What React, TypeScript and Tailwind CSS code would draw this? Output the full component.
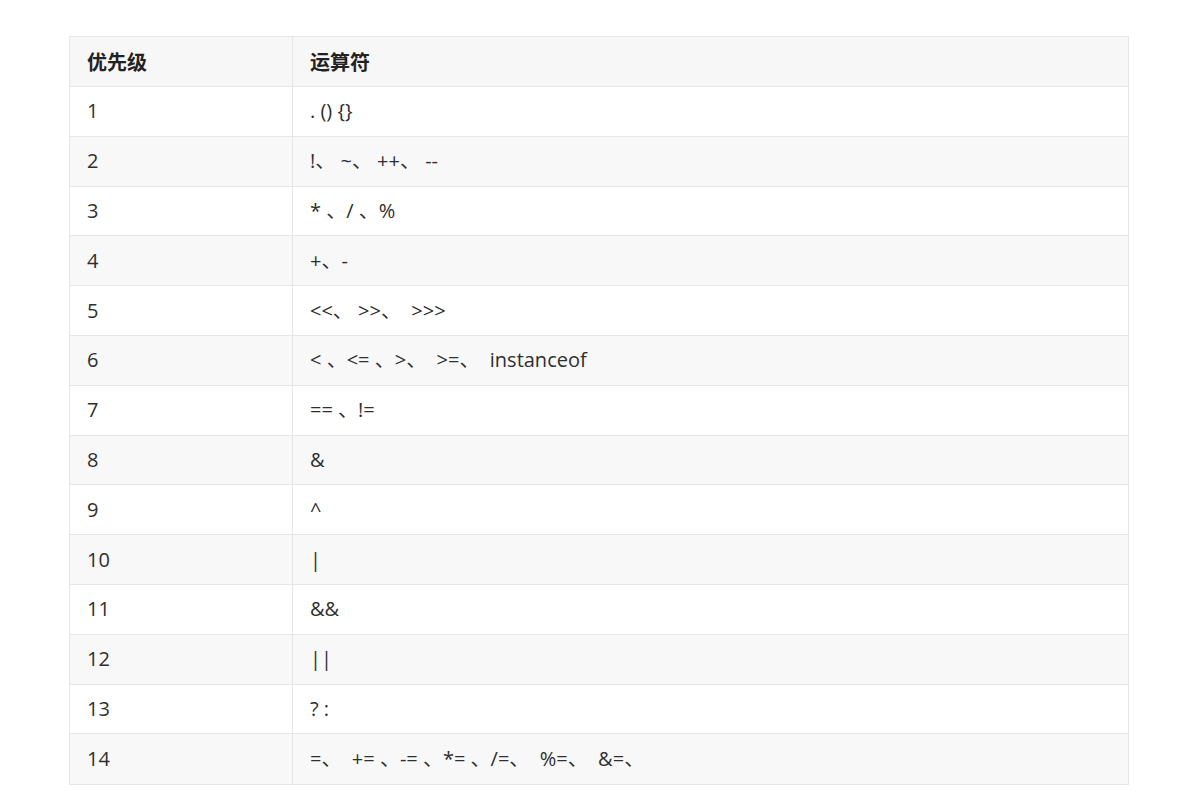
import React from "react";

const rows: [string, string][] = [
  ["1", ". () {}"],
  ["2", "!、 ~、 ++、 --"],
  ["3", "* 、/ 、%"],
  ["4", "+、-"],
  ["5", "<<、 >>、  >>>"],
  ["6", "< 、<= 、>、  >=、  instanceof"],
  ["7", "== 、!="],
  ["8", "&"],
  ["9", "^"],
  ["10", "|"],
  ["11", "&&"],
  ["12", "||"],
  ["13", "? :"],
  ["14", "=、  += 、-= 、*= 、/=、  %=、  &=、"],
];

export default function App() {
  return (
    <div
      className="w-[1195px] h-[808px] bg-white pt-[36px] pl-[69px]"
      style={{ fontFamily: '"Open Sans", "Noto Sans CJK SC", sans-serif' }}
    >
      <div className="w-[1060px] border border-[#e6e6e6] text-[20px] text-[#2f2f2f]">
        <div className="flex h-[50px] bg-[#f7f7f7] border-b border-[#e6e6e6] font-bold text-[#222]">
          <div className="w-[223px] border-r border-[#e6e6e6] pl-[17px] flex items-center" style={{ fontFamily: '"Noto Sans CJK SC", sans-serif' }}>
            优先级
          </div>
          <div className="flex-1 pl-[17px] flex items-center" style={{ fontFamily: '"Noto Sans CJK SC", sans-serif' }}>
            运算符
          </div>
        </div>
        {rows.map(([a, b], i) => (
          <div
            key={a}
            className={`flex h-[49.8px] ${i < rows.length - 1 ? "border-b" : ""} border-[#e6e6e6] ${
              i % 2 === 1 ? "bg-[#f8f8f8]" : "bg-white"
            }`}
          >
            <div className="w-[223px] border-r border-[#e6e6e6] pl-[17px] flex items-center">{a}</div>
            <div className="flex-1 pl-[17px] flex items-center whitespace-pre">{b}</div>
          </div>
        ))}
      </div>
    </div>
  );
}
